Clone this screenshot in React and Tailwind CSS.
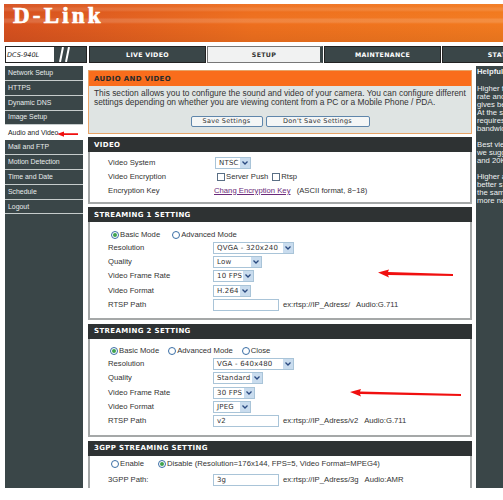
const sideLinks = [
  "Network Setup",
  "HTTPS",
  "Dynamic DNS",
  "Image Setup",
  "Audio and Video",
  "Mail and FTP",
  "Motion Detection",
  "Time and Date",
  "Schedule",
  "Logout",
];

const helpBlocks = [
  ["Higher fr", "rate and", "gives be", "At the s", "requires", "bandwid"],
  ["Best vie", "we sugg", "and 20K"],
  ["Higher a", "better s", "the same", "more ne"],
];

function Tab({ label, className }) {
  return (
    <div
      className={`shrink-0 flex items-center justify-center bg-[#3a4648] border border-[#222] font-['DejaVu_Sans'] font-bold text-[6.3px] tracking-[0.3px] text-white ${className}`}
    >
      {label}
    </div>
  );
}

function Select({ value, width }) {
  return (
    <div
      style={{ width }}
      className="h-[12px] flex items-center justify-between border border-[#a9c4d8] bg-white pl-[3px] font-['DejaVu_Sans'] text-[7px] tracking-[0.2px] text-[#333]"
    >
      <span>{value}</span>
      <span className="w-[10px] h-full flex items-center justify-center bg-[#c9dcee]">
        <svg width="6" height="4" viewBox="0 0 6 4" fill="none">
          <path d="M0.5 0.5 L3 3 L5.5 0.5" stroke="#2b4a80" strokeWidth="1.3" />
        </svg>
      </span>
    </div>
  );
}

function TextBox({ value }) {
  return (
    <div className="w-[66px] h-[12px] flex items-center border border-[#a9c4d8] bg-white pl-[3px] font-['DejaVu_Sans'] text-[7px] text-[#333]">
      {value}
    </div>
  );
}

function Radio({ label, checked }) {
  return (
    <span className="flex items-center gap-[1px]">
      <span className="w-[8px] h-[8px] rounded-full border border-[#3a6ea5] bg-white flex items-center justify-center">
        {checked && <span className="w-[4px] h-[4px] rounded-full bg-[#3fa34d]" />}
      </span>
      <span>{label}</span>
    </span>
  );
}

function Check({ label }) {
  return (
    <span className="flex items-center gap-[1px]">
      <span className="w-[8px] h-[8px] border border-[#5a6f85] bg-white" />
      <span>{label}</span>
    </span>
  );
}

function Row({ label, children, className = "h-[14.3px]" }) {
  return (
    <div className={`flex items-center ${className}`}>
      <span className="w-[123px] pl-[18px] shrink-0">{label}</span>
      {children}
    </div>
  );
}

function Panel({ title, bodyClass, children }) {
  return (
    <section className="mb-[3.5px]">
      <h2 className="h-[15px] flex items-center pl-[6px] bg-[#2e3233] font-['DejaVu_Sans'] font-bold text-[7px] tracking-[0.35px] text-white">
        {title}
      </h2>
      <div className={`bg-white border-x-2 border-b-2 border-[#a5a8a8] ${bodyClass}`}>
        {children}
      </div>
    </section>
  );
}

function Hint({ children }) {
  return <span className="ml-[4px] whitespace-pre">{children}</span>;
}

export default function App() {
  return (
    <div className="relative w-[503px] h-[488px] overflow-hidden bg-white pl-1 pt-1 font-['Liberation_Sans',sans-serif] text-[7.7px] leading-[10px] text-[#333]">
      <header className="h-[38px] pl-[9px] pt-[3px] bg-[linear-gradient(180deg,rgba(255,255,255,0.04)_0,rgba(255,255,255,0.04)_3px,rgba(255,255,255,0.12)_4px,rgba(255,255,255,0.12)_6px,rgba(255,255,255,0)_8px,rgba(255,255,255,0.02)_14px,rgba(255,255,255,0.15)_15px,rgba(255,255,255,0.15)_18px,rgba(255,255,255,0)_20px,rgba(0,0,0,0.06)_38px),linear-gradient(90deg,#d6501f,#ee6f1e_50%,#f27a1f)]">
        <span className="block font-['Liberation_Serif',serif] font-bold text-[23px] leading-[17px] tracking-[3.2px] text-white [-webkit-text-stroke:0.7px_white]">
          D-Link
        </span>
      </header>

      <nav className="flex gap-[1px] h-[17px] mt-[4px]">
        <div className="w-[82px] shrink-0 ml-[1px] mr-[1px] flex bg-[#3a4648] border border-[#222]">
          <span className="w-[48px] bg-white flex items-center pl-[1px] font-['DejaVu_Sans'] italic text-[6.5px] text-[#222]">
            DCS-940L
          </span>
          <svg width="18" height="15" viewBox="0 0 18 15" className="ml-[1px]" fill="none">
            <path d="M5 15 L8 0 M11 15 L14 0" stroke="#fff" strokeWidth="2" />
          </svg>
        </div>
        <Tab label="LIVE VIDEO" className="w-[117px]" />
        <div className="w-[116px] shrink-0 flex items-center justify-center bg-[#f1f2f2] border border-[#777] border-r-[3px] border-r-[#3a4648] font-['DejaVu_Sans'] font-bold text-[6.3px] tracking-[0.3px] text-[#333]">
          SETUP
        </div>
        <Tab label="MAINTENANCE" className="w-[117px]" />
        <Tab label="STATUS" className="w-[120px]" />
      </nav>

      <div className="flex mt-[3px]">
        <aside className="w-[78px] h-[423px] ml-[1px] bg-[#3a4648] text-[6.9px] text-[#e8ecec] shrink-0">
          {sideLinks.map((link) => (
            <div
              key={link}
              className={
                link === "Audio and Video"
                  ? "h-[14.85px] flex items-center pl-[3px] bg-white text-[#222]"
                  : "h-[14.85px] flex items-center pl-[3px] border-b border-[#c6cccc]"
              }
            >
              {link}
            </div>
          ))}
        </aside>

        <main className="w-[384px] ml-[5px] mt-[4px] shrink-0">
          <section className="mb-[3px] border border-[#e8a468]">
            <h1 className="h-[15px] flex items-center pl-[5px] bg-[#f96d1c] font-['DejaVu_Sans'] font-bold text-[7px] tracking-[0.35px] text-[#2a2a2a]">
              AUDIO AND VIDEO
            </h1>
            <div className="h-[47px] bg-[#dfe4e3] pl-[5px] pt-[3px]">
              <p className="text-[8.4px] leading-[9px] whitespace-nowrap">
                This section allows you to configure the sound and video of your camera. You can configure different
                <br />
                settings depending on whether you are viewing content from a PC or a Mobile Phone / PDA.
              </p>
              <div className="flex justify-center gap-[3px] mt-[8.5px] pr-[5px] font-['DejaVu_Sans'] text-[6.5px] tracking-[0.25px]">
                <span className="w-[72px] h-[11px] flex items-center justify-center rounded-[2px] border border-[#5f86ab] bg-[#f4f6f6]">
                  Save Settings
                </span>
                <span className="w-[104px] h-[11px] flex items-center justify-center rounded-[2px] border border-[#5f86ab] bg-[#f4f6f6]">
                  Don't Save Settings
                </span>
              </div>
            </div>
          </section>

          <Panel title="VIDEO" bodyClass="h-[51.5px] pt-[4px]">
            <Row label="Video System">
              <div className="ml-[2px]">
                <Select value="NTSC" width={36} />
              </div>
            </Row>
            <Row label="Video Encryption">
              <div className="ml-[4px] flex gap-[4px]">
                <Check label="Server Push" />
                <Check label="Rtsp" />
              </div>
            </Row>
            <Row label="Encryption Key" className="h-[12px]">
              <a className="ml-[1px] text-[#6b2a7a] underline">Chang Encryption Key</a>
              <Hint>{" (ASCII format, 8~18)"}</Hint>
            </Row>
          </Panel>

          <Panel title="STREAMING 1 SETTING" bodyClass="h-[98px] pt-[6.5px]">
            <div className="flex items-center h-[12px] pl-[21px] gap-[12px]">
              <Radio label="Basic Mode" checked />
              <Radio label="Advanced Mode" />
            </div>
            <Row label="Resolution">
              <Select value="QVGA - 320x240" width={81} />
            </Row>
            <Row label="Quality">
              <Select value="Low" width={49} />
            </Row>
            <Row label="Video Frame Rate">
              <Select value="10 FPS" width={41} />
            </Row>
            <Row label="Video Format">
              <Select value="H.264" width={38} />
            </Row>
            <Row label="RTSP Path">
              <TextBox value="" />
              <Hint>{"ex:rtsp://IP_Adress/   Audio:G.711"}</Hint>
            </Row>
          </Panel>

          <Panel title="STREAMING 2 SETTING" bodyClass="h-[98.5px] pt-[6.5px]">
            <div className="flex items-center h-[12px] pl-[20px] gap-[9px]">
              <Radio label="Basic Mode" checked />
              <Radio label="Advanced Mode" />
              <Radio label="Close" />
            </div>
            <Row label="Resolution">
              <Select value="VGA - 640x480" width={81} />
            </Row>
            <Row label="Quality">
              <Select value="Standard" width={50} />
            </Row>
            <Row label="Video Frame Rate">
              <Select value="30 FPS" width={42} />
            </Row>
            <Row label="Video Format">
              <Select value="JPEG" width={38} />
            </Row>
            <Row label="RTSP Path">
              <TextBox value="v2" />
              <Hint>{"ex:rtsp://IP_Adress/v2   Audio:G.711"}</Hint>
            </Row>
          </Panel>

          <Panel title="3GPP STREAMING SETTING" bodyClass="h-[40px] pt-[2px]">
            <div className="flex items-center h-[12px] pl-[21px] gap-[14px]">
              <Radio label="Enable" />
              <Radio label="Disable (Resolution=176x144, FPS=5, Video Format=MPEG4)" checked />
            </div>
            <Row label="3GPP Path:" className="h-[20px]">
              <TextBox value="3g" />
              <Hint>{"ex:rtsp://IP_Adress/3g   Audio:AMR"}</Hint>
            </Row>
          </Panel>
        </main>

        <aside className="w-[27px] h-[423px] ml-[4px] shrink-0 overflow-hidden bg-[#3a4648] text-[#eef1f1] pl-[1px] pt-[1px] whitespace-nowrap">
          <h3 className="font-bold leading-[10px] mb-[8px]">Helpful</h3>
          {helpBlocks.map((lines) => (
            <p key={lines[0]} className="mb-[8px] leading-[8px]">
              {lines.map((line) => (
                <span key={line} className="block">
                  {line}
                </span>
              ))}
            </p>
          ))}
        </aside>
      </div>

      {/* red arrows someone drew on the screenshot */}
      <svg className="absolute left-0 top-0 pointer-events-none" width="503" height="488" fill="#f00f0f">
        <path d="M57 134 L64 131.5 L64 133.3 L78 133.3 L78 135 L64 135 L64 136.8 Z" />
        <path d="M378 272.5 L389 269.5 L388 272 L453 274 L453 276 L388 275 L389 277.5 Z" />
        <path d="M350 392 L361 389 L360 391.5 L461 394 L461 396 L360 394 L361 396.5 Z" />
      </svg>
    </div>
  );
}
